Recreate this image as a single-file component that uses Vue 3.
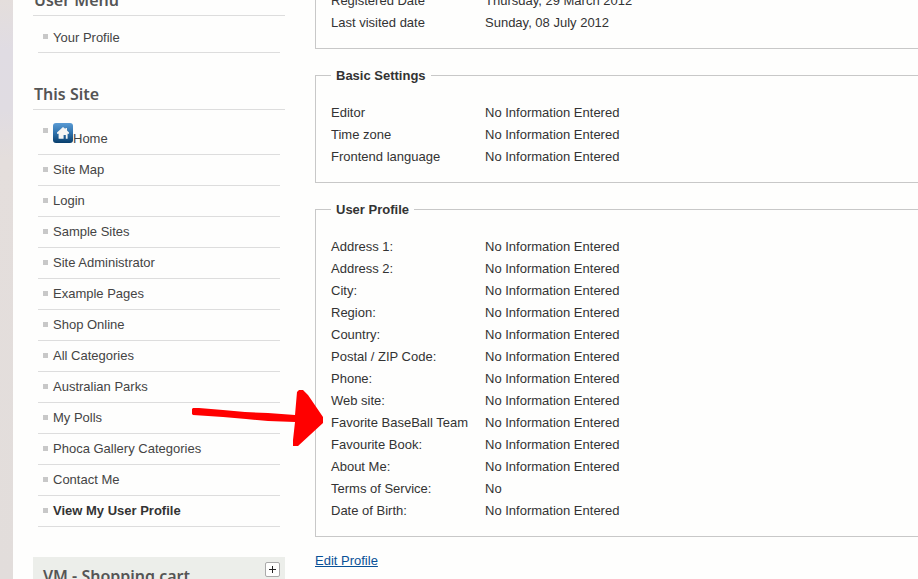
<script setup>
const siteLinks = [
  'Home', 'Site Map', 'Login', 'Sample Sites', 'Site Administrator', 'Example Pages',
  'Shop Online', 'All Categories', 'Australian Parks', 'My Polls',
  'Phoca Gallery Categories', 'Contact Me', 'View My User Profile',
]

const none = 'No Information Entered'

const account = [
  ['Registered Date', 'Thursday, 29 March 2012'],
  ['Last visited date', 'Sunday, 08 July 2012'],
]

const groups = [
  { title: 'Basic Settings', rows: [['Editor', none], ['Time zone', none], ['Frontend language', none]] },
  {
    title: 'User Profile',
    rows: [
      ['Address 1:', none], ['Address 2:', none], ['City:', none], ['Region:', none],
      ['Country:', none], ['Postal / ZIP Code:', none], ['Phone:', none], ['Web site:', none],
      ['Favorite BaseBall Team', none], ['Favourite Book:', none], ['About Me:', none],
      ['Terms of Service:', 'No'], ['Date of Birth:', none],
    ],
  },
]
</script>

<template>
  <div class="page">
    <div class="content">
      <aside class="sidebar">
        <section class="module">
          <h3>User Menu</h3>
          <ul class="menu">
            <li><a href="#">Your Profile</a></li>
          </ul>
        </section>
        <section class="module">
          <h3>This Site</h3>
          <ul class="menu">
            <li v-for="link in siteLinks" :key="link" :class="{ home: link === 'Home', active: link === 'View My User Profile' }">
              <a href="#">
                <svg v-if="link === 'Home'" class="home-icon" width="20" height="20" viewBox="0 0 20 20" aria-hidden="true">
                  <defs>
                    <linearGradient id="homeBlue" x1="0" y1="0" x2="0" y2="1">
                      <stop offset="0" stop-color="#5a9bd4" />
                      <stop offset="0.5" stop-color="#2f72ac" />
                      <stop offset="1" stop-color="#083e6b" />
                    </linearGradient>
                  </defs>
                  <rect width="20" height="20" rx="3" fill="url(#homeBlue)" />
                  <path d="M10 4L12.5 6V5H14V7.5L16 9.6V10.8H14.6V15.8H12.8V12H10.6V15.8H5.6V10.8H4V9.6Z" fill="#f6f6f4" />
                </svg><span>{{ link }}</span>
              </a>
            </li>
          </ul>
        </section>
        <section class="cart">
          <h3>VM - Shopping cart</h3>
          <button type="button" aria-label="Expand shopping cart">
            <svg width="9" height="9" viewBox="0 0 9 9" aria-hidden="true">
              <path d="M4 1H5V4H8V5H5V8H4V5H1V4H4Z" fill="#222" />
            </svg>
          </button>
        </section>
      </aside>

      <main>
        <section class="panel">
          <dl>
            <template v-for="row in account" :key="row[0]">
              <dt>{{ row[0] }}</dt>
              <dd>{{ row[1] }}</dd>
            </template>
          </dl>
        </section>
        <fieldset v-for="group in groups" :key="group.title" class="panel">
          <legend>{{ group.title }}</legend>
          <dl>
            <template v-for="row in group.rows" :key="row[0]">
              <dt>{{ row[0] }}</dt>
              <dd>{{ row[1] }}</dd>
            </template>
          </dl>
        </fieldset>
        <a class="edit" href="#">Edit Profile</a>
      </main>
    </div>

    <svg class="arrow" width="134" height="60" viewBox="0 0 134 60" aria-hidden="true">
      <path d="M3 20H9L33 22L55 24L78 25L105 27L107 4L109 2H113L118 7L133 29V35L108 58H103V52L105 34L78 33L56 31L33 29L3 27L2 26V21Z" fill="#ff0000" />
    </svg>
  </div>
</template>

<style>
body {
  margin: 0;
  overflow: hidden;
}
</style>

<style scoped>
.page {
  position: relative;
  box-sizing: border-box;
  height: 100vh;
  overflow: hidden;
  padding-left: 13px;
  background: linear-gradient(to right, transparent 13px, #fefefd 13px),
    linear-gradient(#e4dedc, #e0dce3 50px, #e0dce2 110px, #e4dedc 160px, #e2dddb);
  color: #333;
  font: 13px/22px "Liberation Sans", Arial, sans-serif;
}

.content {
  display: flex;
  gap: 30px;
  margin-top: -11px;
  padding-left: 20px;
}

.sidebar {
  flex: 0 0 252px;
}

.module {
  margin-bottom: 30px;
}

h3 {
  margin: 0;
  color: #555;
  font: 600 16px/21px "Noto Sans", "Open Sans", sans-serif;
}

.module h3 {
  padding: 1px 1px 4px;
  border-bottom: 1px solid #ddd;
}

.menu {
  list-style: none;
  margin: 0;
  padding: 6px 5px 0;
}

.menu li {
  display: flex;
  gap: 5px;
  padding: 4px 5px;
  border-bottom: 1px solid #ddd;
}

.menu li::before {
  content: "";
  width: 5px;
  height: 5px;
  margin-top: 8px;
  background: #c8c8c8;
}

.menu li:first-child {
  padding: 5px 5px 3px;
}

.menu li:first-child::before {
  margin-top: 7px;
}

.menu a {
  display: flex;
  align-items: flex-end;
  color: #444;
  text-decoration: none;
}

.menu li.home {
  padding: 7px 5px 4px;
}

.menu li.home::before {
  margin-top: 5px;
}

.home-icon {
  margin-bottom: 7px;
}

.menu .active a {
  color: #333;
  font-weight: bold;
}

.cart {
  display: flex;
  justify-content: space-between;
  align-items: flex-start;
  padding: 5px 5px 12px 10px;
  background: #eceeea;
}

.cart h3 {
  padding-top: 4px;
}

.cart button {
  display: flex;
  align-items: center;
  justify-content: center;
  width: 15px;
  height: 15px;
  padding: 0;
  border: 1px solid #aaa;
  border-radius: 2px;
  background: #fefefd;
}

main {
  flex: 1;
  min-width: 0;
}

.panel {
  min-width: 0;
  margin: 0 0 17px;
  padding: 0 0 14px 15px;
  border: 1px solid #c8c8c8;
  border-right: 0;
}

section.panel {
  padding-top: 1px;
  border-top: 0;
}

fieldset.panel {
  padding-top: 17px;
}

legend {
  padding: 0 5px;
  font-weight: bold;
  line-height: 19px;
}

dl {
  display: grid;
  grid-template-columns: 154px 1fr;
  margin: 0;
}

dd {
  margin: 0;
}

.panel:has(+ .edit) {
  margin-bottom: 13px;
}

.edit {
  display: block;
  width: fit-content;
  color: #095197;
}

.arrow {
  position: absolute;
  left: 190px;
  top: 388px;
}
</style>
